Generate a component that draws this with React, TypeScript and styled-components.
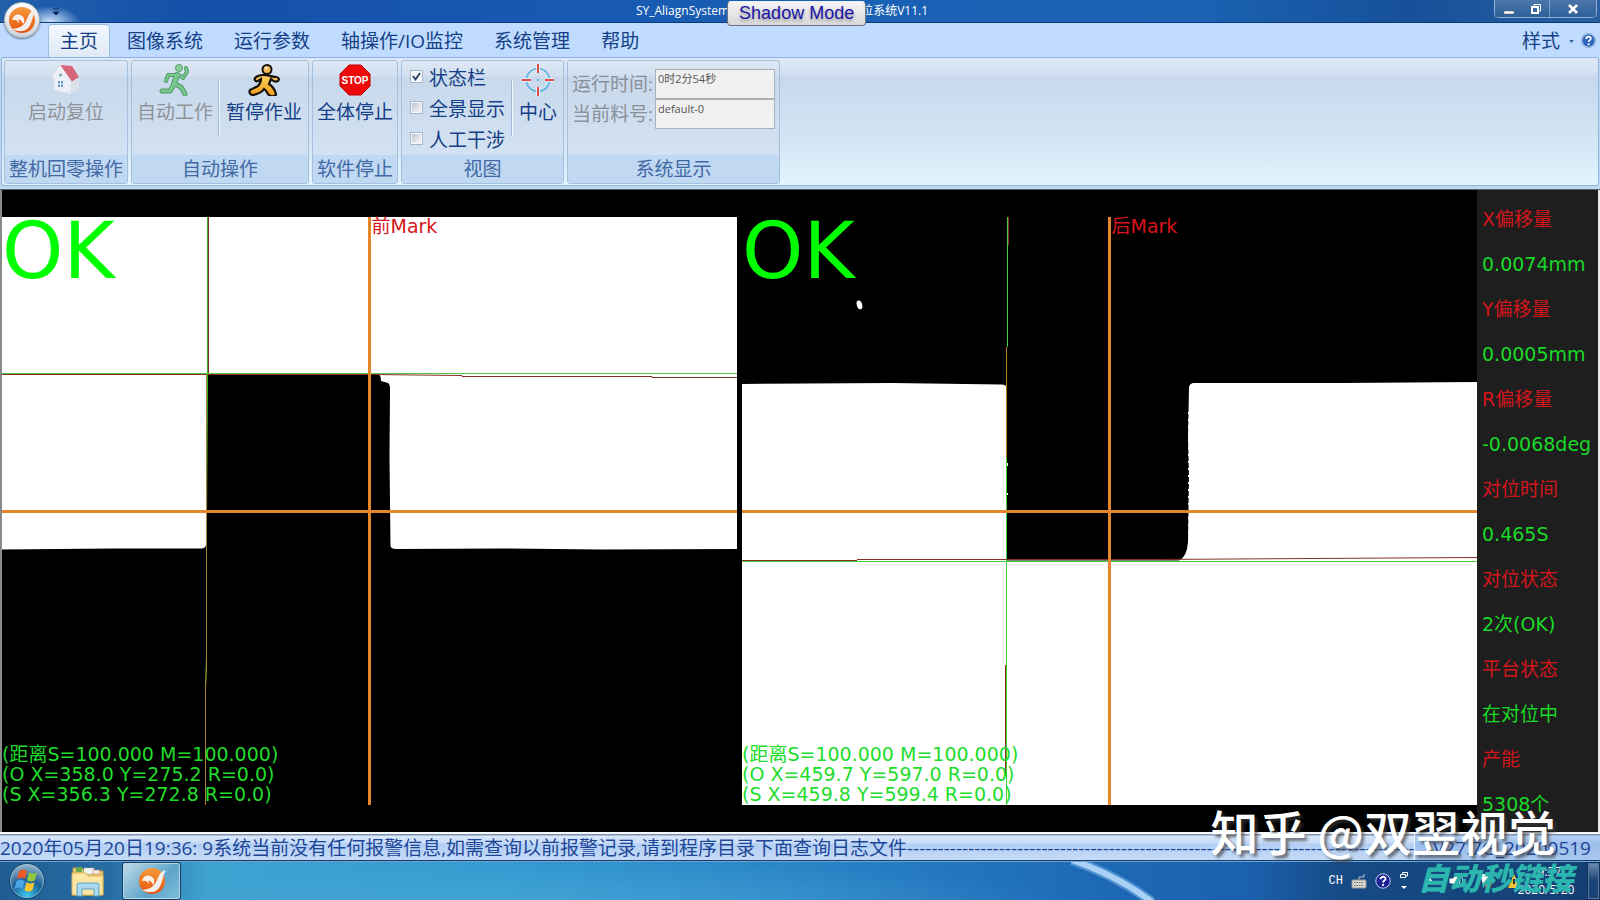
import React from "react";
import styled, { createGlobalStyle, css } from "styled-components";

const uiFont = `"Open Sans", "Noto Sans CJK SC", sans-serif`;
const wideFont = `"DejaVu Sans", "Noto Sans CJK SC", sans-serif`;

const GlobalStyle = createGlobalStyle`
  * { box-sizing: border-box; }
  body { margin: 0; background: #000; font-family: ${uiFont}; }
  button, input { font-family: inherit; }
`;

const Desktop = styled.div`
  position: relative;
  min-height: 100vh;
  display: flex;
  flex-direction: column;
  overflow: hidden;
`;

/* ---------- title bar ---------- */
const TitleBar = styled.header`
  position: relative;
  height: 23px;
  display: flex;
  align-items: center;
  justify-content: center;
  padding-right: 36px;
  color: #fff;
  font-size: 12px;
  line-height: 20px;
  white-space: nowrap;
  background:
    radial-gradient(ellipse 30px 16px at 50px 22px, #cfe4fc 0%, rgba(120, 170, 230, 0) 100%),
    linear-gradient(90deg, #2260ac 0%, #1450a8 12%, #1857b0 30%, #1961b5 55%, #1a62b2 75%, #17509a 88%, #2a5f9f 100%);
  border-bottom: 1px solid #0b3a78;
`;
const TitleTail = styled.span`
  margin-left: -5px;
`;
const ShadowMode = styled.button`
  z-index: 1;
  height: 25px;
  padding: 0 11px;
  margin: 5px 0 0 -2px;
  border: 1px solid #6f7680;
  border-top-color: #e9eef5;
  border-radius: 4px;
  background: linear-gradient(#f4f4f4, #d8d8d8);
  color: #1c14a8;
  font: 18px/23px "Liberation Sans", sans-serif;
  text-shadow: 0 2px 3px #999;
`;
const AppButton = styled.button`
  position: absolute;
  z-index: 2;
  left: 4px;
  top: 2px;
  width: 36px;
  height: 36px;
  padding: 3px;
  border: 1px solid #a8b0bc;
  border-radius: 50%;
  background: linear-gradient(#fff, #cdd3dc);
  box-shadow: 0 1px 2px #5d6d84;
`;
const QuickAccess = styled.button`
  position: absolute;
  left: 51px;
  top: 7px;
  width: 10px;
  height: 10px;
  padding: 0;
  border: 0;
  background: none;
  display: flex;
`;
const WindowControls = styled.div`
  position: absolute;
  right: 3px;
  top: 0;
  display: flex;
  border: 1px solid #8fb0d4;
  border-top: 0;
  border-radius: 0 0 5px 5px;
  overflow: hidden;
`;
const WindowButton = styled.button<{ $wide?: boolean }>`
  width: ${(p) => (p.$wide ? 47 : 27)}px;
  height: 17px;
  padding: 0;
  border: 0;
  border-left: ${(p) => (p.$wide ? "1px solid #7d9fc8" : "0")};
  background: linear-gradient(#4c76ac, #2d6098);
  display: flex;
  align-items: center;
  justify-content: center;
`;

/* ---------- ribbon ---------- */
const TabBar = styled.nav`
  height: 34px;
  display: flex;
  align-items: stretch;
  padding-left: 48px;
  background: #bfdbff;
`;
const Tab = styled.button<{ $active?: boolean }>`
  height: 33px;
  margin: 1px 1px 0 0;
  padding: 0 14px;
  border: 1px solid transparent;
  border-bottom: 0;
  background: none;
  color: #153f86;
  font-size: 19px;
  line-height: 32px;
  white-space: nowrap;
  ${(p) =>
    p.$active &&
    css`
      padding: 0 11px;
      margin-right: 2px;
      border-color: #9dbde6;
      border-radius: 4px 4px 0 0;
      background: linear-gradient(#f3f9ff, #dfe9f6);
    `}
`;
const TabTools = styled.div`
  margin-left: auto;
  display: flex;
  align-items: center;
  padding-right: 4px;
`;
const StyleButton = styled(Tab)`
  padding: 0;
  margin-right: 5px;
  display: flex;
  align-items: center;
  gap: 8px;
`;
const IconButton = styled.button`
  padding: 0;
  border: 0;
  background: none;
  display: flex;
`;
const RibbonFrame = styled.section`
  padding: 0 1px 3px;
  background: #bfd8ee;
  border-bottom: 1px solid #56616e;
`;
const Ribbon = styled.div`
  display: flex;
  gap: 3px;
  padding: 2px 2px 1px;
  border: 1px solid #8db2e3;
  border-radius: 3px;
  background: linear-gradient(#dfe8f5 0, #d3dff0 17px, #c7d8ed 18px, #d3e4f3 80px, #e2f5fe 100%);
`;
const Group = styled.fieldset<{ $width: number }>`
  width: ${(p) => p.$width}px;
  height: 124px;
  margin: 0;
  padding: 0;
  min-width: 0;
  display: flex;
  flex-direction: column;
  border: 1px solid #a3c0de;
  border-radius: 3px;
  background: linear-gradient(#dee8f5 0, #d3dff0 15px, #c8d9ec 16px, #d6e5f4 100%);
`;
const GroupBody = styled.div<{ $end?: boolean }>`
  flex: 1;
  min-height: 0;
  display: flex;
  justify-content: ${(p) => (p.$end ? "flex-end" : "center")};
  align-items: flex-start;
  padding-top: 3px;
`;
const GroupTitle = styled.div`
  flex: none;
  height: 28px;
  text-align: center;
  color: #4069a5;
  font-size: 19px;
  line-height: 28px;
  white-space: nowrap;
  background: #c0d8f1;
`;
const Command = styled.button<{ $pad?: number }>`
  padding: 0 ${(p) => p.$pad ?? 5}px;
  border: 0;
  background: none;
  display: flex;
  flex-direction: column;
  align-items: center;
  color: #153f86;
  font-size: 19px;
  line-height: 32px;
  white-space: nowrap;
  &:disabled { color: #8f9297; }
  svg { display: block; }
`;
const Divider = styled.i`
  width: 2px;
  height: 56px;
  margin-top: 16px;
  border-left: 1px solid #9fbad9;
  background: #f3f8fd;
`;
const CheckList = styled.div`
  display: flex;
  flex-direction: column;
  margin-top: -2px;
  padding-right: 6px;
`;
const CheckLabel = styled.label`
  display: flex;
  align-items: center;
  gap: 6px;
  height: 31px;
  color: #153f86;
  font-size: 19px;
  line-height: 30px;
  white-space: nowrap;
`;
const CheckBox = styled.input`
  appearance: none;
  width: 13px;
  height: 13px;
  margin: 0 0 2px;
  border: 1px solid #a4b6cc;
  outline: 1px solid #f4f8fc;
  outline-offset: -2px;
  background: linear-gradient(135deg, #b9bec8, #fff);
  &:checked {
    background: #f4f6fa
      url("data:image/svg+xml,%3Csvg xmlns='http://www.w3.org/2000/svg' viewBox='0 0 11 11'%3E%3Cpath d='M2 5l2.5 3.5L9 2' fill='none' stroke='%23253e66' stroke-width='1.8'/%3E%3C/svg%3E");
  }
`;
const Fields = styled.div`
  display: flex;
  flex-direction: column;
  padding-top: 5px;
`;
const Field = styled.label`
  display: flex;
  color: #8a9099;
  font-size: 19px;
  line-height: 30px;
  white-space: nowrap;
  gap: 2px;
`;
const FieldInput = styled.input`
  width: 120px;
  height: 30px;
  padding: 0 2px 12px;
  border: 1px solid #a9b1b8;
  background: #f0f0f0;
  color: #555;
  font-size: 11px;
`;

/* ---------- camera views ---------- */
const Main = styled.main`
  flex: 1;
  display: flex;
  padding: 0 2px;
  background: #000;
  box-shadow: inset 2px 0 #8a8a8a, inset -2px 0 #e8e8e8;
`;
const Views = styled.div`
  flex: 1;
  display: grid;
  grid-template-columns: 1fr 1fr;
  gap: 5px;
  padding: 27px 0;
`;
const View = styled.figure`
  position: relative;
  margin: 0;
  min-height: 400px;
`;
const Scene = styled.svg`
  position: absolute;
  inset: 0;
  width: 100%;
  height: 100%;
`;
const Verdict = styled.strong`
  position: absolute;
  left: 0;
  top: 0;
  color: #0f0;
  font: 78px/68px "DejaVu Sans", sans-serif;
`;
const MarkName = styled.span`
  position: absolute;
  left: calc(50% + 2px);
  top: 0;
  color: #d8141c;
  font: 19px/19px ${wideFont};
`;
const Readout = styled.figcaption`
  position: absolute;
  left: 0;
  bottom: 1px;
  color: #22dc2c;
  font: 19px/20px ${wideFont};
  white-space: pre;
`;
const Side = styled.dl`
  width: 121px;
  margin: 0;
  padding: 7px 0 0 5px;
  background: #1e1e1e;
  font: 19px/45px ${wideFont};
  white-space: nowrap;
`;
const SideLabel = styled.dt`
  color: #d4161c;
`;
const SideValue = styled.dd`
  margin: 0;
  color: #1bd927;
`;

/* ---------- status and task bars ---------- */
const StatusBar = styled.footer`
  height: 29px;
  display: flex;
  border-top: 2px solid #f4f8fd;
  border-bottom: 1px solid #123c6e;
  background: linear-gradient(#7f93ae 0, #7f93ae 1px, #d9e8fb 2px, #c8dcf8 9px, #b2cff5 10px, #c6dbf6 100%);
  color: #1d4596;
  font-size: 19px;
  line-height: 29px;
  white-space: nowrap;
`;
const StatusText = styled.div`
  flex: 1;
  min-width: 0;
  overflow: hidden;
`;
const StatusVersion = styled.div`
  width: 186px;
  padding-right: 9px;
  text-align: right;
  border-left: 1px solid #e9f2fd;
  background: linear-gradient(#7f93ae 0, #7f93ae 1px, #b6d1f4 2px, #9dbfec 10px, #a9c8f0 100%);
`;
const TaskBar = styled.div`
  height: 39px;
  display: flex;
  align-items: stretch;
  border-top: 1px solid #6fa5cf;
  background:
    radial-gradient(ellipse 500px 60px at 620px 60px, rgba(110, 190, 230, 0.4), transparent),
    linear-gradient(90deg, #1f5c92 0, #276da4 110px, #3fa3d2 210px, #339bd0 500px, #2780c4 850px, #1f6cb8 1060px, #1b60ad 1250px, #164b86 1340px, #143e72 100%);
  position: relative;
`;
const Streak = styled.svg`
  position: absolute;
  left: 1040px;
  top: 0;
  width: 140px;
  height: 38px;
`;
const TaskButton = styled.button<{ $active?: boolean; $width: number }>`
  width: ${(p) => p.$width}px;
  padding: 0;
  border: 0;
  background: none;
  display: flex;
  align-items: center;
  justify-content: center;
  ${(p) =>
    p.$active &&
    css`
      border: 1px solid #173f66;
      border-radius: 3px;
      box-shadow: inset 0 0 0 1px #b4d7ea;
      background: linear-gradient(135deg, #c2dbe8, #5ea5c9 60%, #82c0dc);
    `}
`;
const Tray = styled.div`
  margin-left: auto;
  display: flex;
  align-items: center;
  gap: 8px;
  color: #fff;
`;
const Language = styled.span`
  font: 12px/16px "Liberation Mono", monospace;
`;
const TrayIcons = styled.div`
  display: flex;
  align-items: center;
  gap: 14px;
  padding-left: 8px;
`;
const Clock = styled.time`
  width: 66px;
  text-align: center;
  font-size: 12px;
  line-height: 18px;
  margin-left: -22px;
`;
const ShowDesktop = styled.button`
  align-self: stretch;
  width: 13px;
  padding: 0;
  border: 1px solid #0e2f57;
  box-shadow: inset 0 0 0 1px #58789f;
  background: linear-gradient(#6c8bae, #1a4275 50%);
`;
const Signature = styled.div`
  position: absolute;
  right: 44px;
  bottom: 38px;
  color: #fff;
  font: 500 48px/64px "Noto Sans CJK SC", sans-serif;
  text-shadow: 3px 3px 3px rgba(60, 60, 60, 0.65);
  white-space: nowrap;
  pointer-events: none;
`;
const SiteMark = styled.div`
  position: absolute;
  right: 27px;
  bottom: 5px;
  color: #2bb5ae;
  font: italic 900 31px/36px "Noto Sans CJK SC", sans-serif;
  white-space: nowrap;
  pointer-events: none;
`;

/* ---------- drawings ---------- */
const Logo = ({ size }: { size: number }) => (
  <svg width={size} height={size} viewBox="0 0 28 28" aria-hidden="true">
    <defs>
      <linearGradient id="orange" x1="0" y1="0" x2="0" y2="1">
        <stop offset="0" stopColor="#f59a3c" />
        <stop offset="1" stopColor="#e9520b" />
      </linearGradient>
    </defs>
    <circle cx="14" cy="14" r="13" fill="url(#orange)" />
    <path d="M4 14c1-5 6-7 10-4c3 2 3 6 1 8c-1-3-3-5-5-4c1 1 1 2 1 3c-2-3-4-4-7-3z" fill="#f7efe9" />
    <path d="M28 3c-5 1-7 5-9 10c-2 5-5 9-15 10c8 4 16 3 19-6c2-5 2-9 5-14z" fill="#f3efee" />
  </svg>
);

const House = () => (
  <svg width="32" height="32" viewBox="0 0 32 32" opacity="0.8">
    <path d="M4 14L12 4l9 13v13L4 26z" fill="#f6f7fa" stroke="#dde2e9" />
    <path d="M21 17l8-4v12l-8 5z" fill="#e1e4eb" />
    <path d="M10 1l12 1l7 11l-8 5z" fill="#d8475b" />
    <path d="M10 1L2 14l2 1l7-10l9 14l2-1z" fill="#fbfbfd" stroke="#d8dde5" strokeWidth="0.500" />
    <rect x="8" y="17" width="5" height="6" fill="#4f80c0" />
    <path d="M10.500 17v6M8 20h5" stroke="#fff" />
    <circle cx="10.500" cy="11" r="1.500" fill="#4a9a8c" />
  </svg>
);

const Runner = () => (
  <svg width="32" height="32" viewBox="0 0 32 32">
    <g fill="none" stroke="#4f9c66" strokeLinecap="round" strokeLinejoin="round">
      <g strokeWidth="6">
        <path d="M18 11l-3 9" />
        <path d="M16 11H9l-2 6M20 11l4 3l4-6l-1-4" strokeWidth="4" />
        <path d="M15 20l-4 7H3M16 20l6 3l4 7" strokeWidth="5" />
      </g>
      <g stroke="#79c78e">
        <path d="M18 11l-3 9" strokeWidth="4" />
        <path d="M16 11H9l-2 6M20 11l4 3l4-6l-1-4" strokeWidth="2" />
        <path d="M15 20l-4 7H3M16 20l6 3l4 7" strokeWidth="3" />
      </g>
    </g>
    <circle cx="20" cy="4" r="3.500" fill="#8bd09b" stroke="#4f9c66" />
  </svg>
);

const Walker = () => (
  <svg width="32" height="32" viewBox="0 0 32 32">
    <defs>
      <linearGradient id="gold" x1="0" y1="0" x2="0" y2="1">
        <stop offset="0" stopColor="#ffd465" />
        <stop offset="1" stopColor="#f39a12" />
      </linearGradient>
    </defs>
    <path
      d="M15 11c-3 0-6 1-8 3c-1 2 1 4 3 3l3-2c0 3-1 5-3 7l-6 3c-4 1-3 6 1 6c5-1 9-3 11-6c2 1 3 3 4 5c2 3 8 3 8 0c-1-4-4-8-7-10l2-5c2 2 5 3 7 2c2-2 0-4-2-4c-4 0-7-2-13-2z"
      fill="url(#gold)"
      stroke="#15100a"
      strokeWidth="2.200"
    />
    <circle cx="19" cy="5.500" r="4.500" fill="#f7b955" stroke="#15100a" strokeWidth="2" />
    <circle cx="18" cy="4" r="1.500" fill="#ffe9c4" />
  </svg>
);

const StopSign = () => (
  <svg width="32" height="32" viewBox="0 0 32 32">
    <path d="M10 1h12l9 9v12l-9 9H10l-9-9V10z" fill="#ee0a0a" stroke="#c20000" />
    <text x="16" y="20" textAnchor="middle" fill="#fff" fontFamily="Liberation Sans" fontWeight="700" fontSize="10">
      STOP
    </text>
  </svg>
);

const Crosshair = () => (
  <svg width="32" height="32" viewBox="0 0 32 32" fill="none">
    <circle cx="16" cy="16" r="11.500" stroke="#57b2de" strokeWidth="1.500" />
    <path d="M16 0v9M16 23v9M0 16h9M23 16h9" stroke="#d9f0fa" strokeWidth="4" />
    <path d="M16 0v9M16 23v9M0 16h9M23 16h9" stroke="#e0494e" strokeWidth="2" />
    <circle cx="16" cy="16" r="1" fill="#3fa0d8" />
  </svg>
);

const Help = ({ size, dark }: { size: number; dark?: boolean }) => (
  <svg width={size} height={size} viewBox="0 0 16 16">
    <circle cx="8" cy="8" r="7.200" fill={dark ? "#1a1f93" : "#2e66bd"} stroke={dark ? "#c9d0ee" : "#fff"} />
    {!dark && <circle cx="8" cy="8" r="7.600" fill="none" stroke="#5c86c4" strokeWidth="0.700" />}
    <path d="M5.500 6.300c0-3.300 5-3.300 5-.4c0 1.700-2.400 1.700-2.400 3.600" fill="none" stroke="#fff" strokeWidth="1.800" />
    <circle cx="8.100" cy="11.900" r="1.100" fill="#fff" />
  </svg>
);

const Orb = () => (
  <svg width="38" height="38" viewBox="0 0 38 38">
    <defs>
      <radialGradient id="orb" cx="0.5" cy="0.9" r="0.9">
        <stop offset="0" stopColor="#3ec6ee" />
        <stop offset="0.5" stopColor="#1c5d97" />
        <stop offset="1" stopColor="#a3bfd2" />
      </radialGradient>
    </defs>
    <circle cx="19" cy="19" r="17.500" fill="url(#orb)" stroke="#16405f" />
    <circle cx="19" cy="19" r="16.500" fill="none" stroke="#8fc4de" opacity="0.7" />
    <path d="M11 9q4-3 8 0l-2 8q-4-3-8 0z" fill="#ef5a28" />
    <path d="M21 10q4 3 8 0l-2 8q-4 3-8 0z" fill="#8fc740" />
    <path d="M8.500 19q4-3 8 0l-2 8q-4-3-8 0z" fill="#4aa5e4" />
    <path d="M18.500 20q4 3 8 0l-2 8q-4 3-8 0z" fill="#fcc52c" />
  </svg>
);

const Folder = () => (
  <svg width="34" height="32" viewBox="0 0 34 32">
    <path d="M2 3h9l2 3h19v24H2z" fill="#e9c96e" stroke="#c49c3c" />
    <path d="M5 2h6v5H5z" fill="#6aa84f" />
    <path d="M13 3h10v6H13z" fill="#f2f5f7" stroke="#aaa" strokeWidth="0.500" />
    <path d="M22 5h7v4h-7z" fill="#f6f1de" stroke="#c8544c" strokeWidth="0.500" />
    <path d="M1 8h14l2 3h15v19H1z" fill="#fbe7a2" stroke="#d9b65a" />
    <path d="M6 31V20q0-2 2-2h18q2 0 2 2v11h-5v-7H11v7z" fill="#a9d8f0" stroke="#5ea2c8" />
  </svg>
);

const Keyboard = () => (
  <svg width="16" height="16" viewBox="0 0 16 16" fill="none">
    <path d="M8 7V4h5V1" stroke="#b9c2cc" />
    <rect x="1" y="7" width="14" height="8" rx="1" fill="#d9d9d3" stroke="#9a9a92" />
    <path d="M3 9.500h10M3 12.500h10" stroke="#6c6c66" strokeDasharray="1.500 1" />
  </svg>
);

const FrontScene = () => (
  <Scene viewBox="0 0 735 588" preserveAspectRatio="none">
    <rect width="735" height="588" fill="#fff" />
    <path d="M205 157L290 156.500L376 157Q379 158 379 164L386 166Q388 167 388 172L387.500 240L388.500 329Q389 332 394 332L500 331.500L600 332.500L735 332V588H0V332.500L110 331.500L200 331.500Q204 331 204 327z" fill="#000" />
    <g fill="none">
      <path d="M0 156.500H735" stroke="#54c744" />
      <path d="M0 157.500H370L460 158.500V159.500H650V160.500H735" stroke="#84302a" />
      <path d="M206.500 0V156" stroke="#84302a" />
      <path d="M205.500 0V170L204.500 300V440L203.500 470V588" stroke="#3cae32" />
      <path d="M204.500 157V450L203.500 470V588" stroke="#a88432" />
      <path d="M367.500 0V588M0 294.500H735" stroke="#e6862c" strokeWidth="3" />
    </g>
  </Scene>
);

const RearScene = () => (
  <Scene viewBox="0 0 735 588" preserveAspectRatio="none">
    <rect width="735" height="588" fill="#fff" />
    <path d="M0 0H735V165L600 166L451 166Q447 167 447 171L446 220L447 260L446 325Q445 340 437 343.500H265V171Q264 167.500 260 167.500L150 166L0 167z" fill="#000" />
    <ellipse cx="117.500" cy="88" rx="2.700" ry="4.500" fill="#fff" transform="rotate(-15 117 88)" />
    <path d="M446.500 195V320" stroke="#fff" strokeDasharray="2 5" />
    <g fill="none">
      <path d="M265.500 0V130M264.500 240V588M0 344.500H735" stroke="#43cf3a" />
      <path d="M264.500 130V240" stroke="#b97a26" />
      <path d="M266.500 0V28M0 343.500H115M115 342.500H410L735 340.500M263.500 448V559" stroke="#84302a" />
      <path d="M367.500 0V588M0 294.500H735" stroke="#e6862c" strokeWidth="3" />
    </g>
    <path d="M265 246h1v3h-1zM265 276h1v2h-1z" fill="#fff" />
  </Scene>
);

const tabs = ["主页", "图像系统", "运行参数", "轴操作/IO监控", "系统管理", "帮助"];
const measures = [
  ["X偏移量", "0.0074mm"],
  ["Y偏移量", "0.0005mm"],
  ["R偏移量", "-0.0068deg"],
  ["对位时间", "0.465S"],
  ["对位状态", "2次(OK)"],
  ["平台状态", "在对位中"],
  ["产能", "5308个"],
];
const views = [
  {
    mark: "前Mark",
    scene: <FrontScene />,
    lines: "(距离S=100.000 M=100.000)\n(O X=358.0 Y=275.2 R=0.0)\n(S X=356.3 Y=272.8 R=0.0)",
  },
  {
    mark: "后Mark",
    scene: <RearScene />,
    lines: "(距离S=100.000 M=100.000)\n(O X=459.7 Y=597.0 R=0.0)\n(S X=459.8 Y=599.4 R=0.0)",
  },
];

export default function App() {
  return (
    <Desktop>
      <GlobalStyle />
      <TitleBar>
        <AppButton aria-label="菜单">
          <Logo size={28} />
        </AppButton>
        <QuickAccess aria-label="快速访问">
          <svg width="10" height="10" viewBox="0 0 10 10">
            <path d="M2 2h6M2 5l3 3l3-3z" stroke="#0b2c60" fill="#0b2c60" />
          </svg>
        </QuickAccess>
        <span>SY_AliagnSystem</span>
        <ShadowMode>Shadow Mode</ShadowMode>
        <TitleTail>位系统V11.1</TitleTail>
        <WindowControls>
          <WindowButton aria-label="最小化">
            <svg width="12" height="12"><path d="M1 8h10v3H1z" fill="#fff" stroke="#555" strokeWidth="0.500" /></svg>
          </WindowButton>
          <WindowButton aria-label="还原">
            <svg width="12" height="12" fill="none" stroke="#fff"><path d="M4 3V1.500h6.500V8H9" /><rect x="2" y="4" width="6" height="6" strokeWidth="2" /></svg>
          </WindowButton>
          <WindowButton $wide aria-label="关闭">
            <svg width="12" height="12" stroke="#fff" strokeWidth="2.500"><path d="M2 2l8 8M10 2l-8 8" /></svg>
          </WindowButton>
        </WindowControls>
      </TitleBar>

      <TabBar>
        {tabs.map((t, i) => (
          <Tab key={t} $active={i === 0}>{t}</Tab>
        ))}
        <TabTools>
          <StyleButton>
            样式
            <svg width="7" height="5"><path d="M1 1h5L3.500 4z" fill="#3e6aa8" /></svg>
          </StyleButton>
          <IconButton aria-label="关于"><Help size={15} /></IconButton>
        </TabTools>
      </TabBar>

      <RibbonFrame>
        <Ribbon>
          <Group $width={124}>
            <GroupBody>
              <Command disabled><House />启动复位</Command>
            </GroupBody>
            <GroupTitle>整机回零操作</GroupTitle>
          </Group>
          <Group $width={178}>
            <GroupBody>
              <Command disabled><Runner />自动工作</Command>
              <Divider />
              <Command $pad={6}><Walker />暂停作业</Command>
            </GroupBody>
            <GroupTitle>自动操作</GroupTitle>
          </Group>
          <Group $width={86}>
            <GroupBody>
              <Command><StopSign />全体停止</Command>
            </GroupBody>
            <GroupTitle>软件停止</GroupTitle>
          </Group>
          <Group $width={163}>
            <GroupBody $end>
              <CheckList>
                <CheckLabel><CheckBox type="checkbox" defaultChecked />状态栏</CheckLabel>
                <CheckLabel><CheckBox type="checkbox" />全景显示</CheckLabel>
                <CheckLabel><CheckBox type="checkbox" />人工干涉</CheckLabel>
              </CheckList>
              <Divider />
              <Command $pad={6}><Crosshair />中心</Command>
            </GroupBody>
            <GroupTitle>视图</GroupTitle>
          </Group>
          <Group $width={213}>
            <GroupBody>
              <Fields>
                <Field>运行时间:<FieldInput readOnly value="0时2分54秒" /></Field>
                <Field>当前料号:<FieldInput readOnly value="default-0" /></Field>
              </Fields>
            </GroupBody>
            <GroupTitle>系统显示</GroupTitle>
          </Group>
        </Ribbon>
      </RibbonFrame>

      <Main>
        <Views>
          {views.map((v) => (
            <View key={v.mark}>
              {v.scene}
              <Verdict>OK</Verdict>
              <MarkName>{v.mark}</MarkName>
              <Readout>{v.lines}</Readout>
            </View>
          ))}
        </Views>
        <Side>
          {measures.map(([label, value]) => (
            <React.Fragment key={label}>
              <SideLabel>{label}</SideLabel>
              <SideValue>{value}</SideValue>
            </React.Fragment>
          ))}
        </Side>
      </Main>

      <StatusBar>
        <StatusText>
          2020年05月20日19:36: 9系统当前没有任何报警信息,如需查询以前报警记录,请到程序目录下面查询日志文件{"-".repeat(83)}
        </StatusText>
        <StatusVersion>V27.7G_20200519</StatusVersion>
      </StatusBar>

      <TaskBar>
        <Streak viewBox="0 0 140 38" preserveAspectRatio="none">
          <path d="M32 -2Q78 14 112 40" fill="none" stroke="#6fabe4" strokeWidth="10" opacity="0.6" />
          <path d="M32 -2Q78 14 112 40" fill="none" stroke="#a9d0f5" strokeWidth="6" />
        </Streak>
        <TaskButton $width={54} aria-label="开始"><Orb /></TaskButton>
        <TaskButton $width={68} aria-label="资源管理器"><Folder /></TaskButton>
        <TaskButton $width={59} $active aria-label="视觉系统"><Logo size={28} /></TaskButton>
        <Tray>
          <Language>CH</Language>
          <Keyboard />
          <Help size={16} dark />
          <svg width="10" height="20" fill="none" stroke="#fff">
            <path d="M3.500 3V1.500h5V5H7M1.500 3.500h5v3h-5z" />
            <path d="M2 15h6l-3 3z" fill="#fff" stroke="none" />
          </svg>
          <TrayIcons>
            <svg width="10" height="8"><path d="M0 7l5-6l5 6z" fill="#fff" /></svg>
            <svg width="16" height="16" fill="none" stroke="#fff"><path d="M1 6h3l4-4v12l-4-4H1z" fill="#fff" /><path d="M10 5q2 3 0 6M12 3q4 5 0 10" /></svg>
            <svg width="14" height="18"><path d="M1 2h12v8H5v6" fill="#fff" /><circle cx="9" cy="12" r="4" fill="#d33a2c" /></svg>
            <svg width="14" height="16"><path d="M7 1l6 14H1z" fill="#f4c531" /><path d="M7 6v5" stroke="#222" strokeWidth="2" /></svg>
            <Clock>19:37<br />2020/5/20</Clock>
          </TrayIcons>
          <ShowDesktop aria-label="显示桌面" />
        </Tray>
      </TaskBar>

      <Signature>知乎 @双翌视觉</Signature>
      <SiteMark>自动秒链接</SiteMark>
    </Desktop>
  );
}
